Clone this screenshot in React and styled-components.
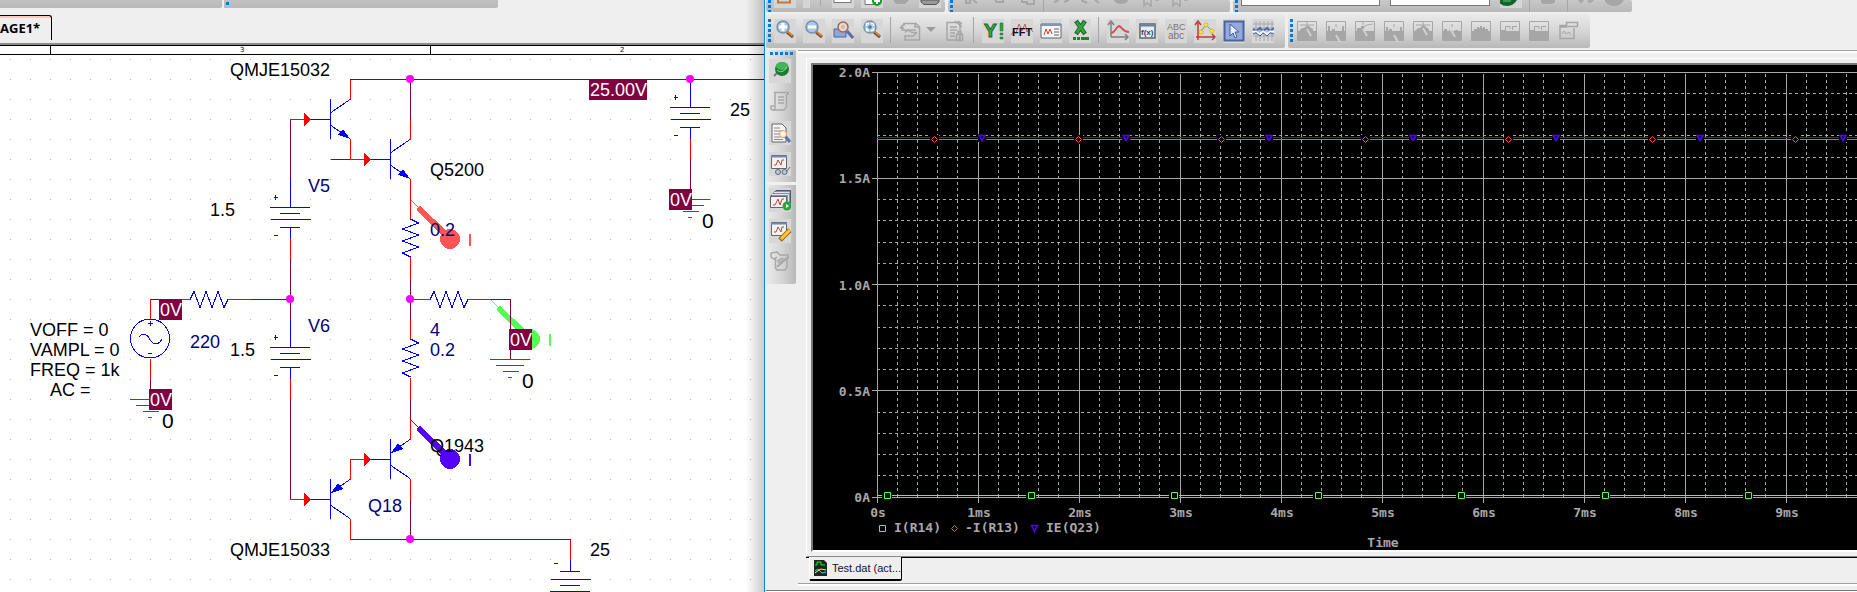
import React from "react";
import styled, { createGlobalStyle } from "styled-components";

const GlobalStyle = createGlobalStyle`
  *, *::before, *::after { box-sizing: border-box; }
  body { margin: 0; background: #efefef; font-family: "Liberation Sans", Arial, sans-serif; overflow: hidden; }
  button { font: inherit; color: inherit; border: 0; padding: 0; background: none; }
`;

const Desktop = styled.main`
  display: flex;
  height: 100vh;
  overflow: hidden;
`;

/* ---------- schematic editor ---------- */

const Editor = styled.section`
  position: relative;
  flex: 0 0 764px;
  display: flex;
  flex-direction: column;
  background: #efefef;
  &::after {
    content: "";
    position: absolute;
    inset: 0 0 0 auto;
    width: 18px;
    background: linear-gradient(90deg, transparent, rgba(0, 0, 0, 0.2));
  }
`;

const EditorBars = styled.div`
  display: flex;
  gap: 2px;
  height: 8px;
`;

const EditorBar = styled.div`
  width: ${(p) => p.$width}px;
  padding: 2px;
  background: linear-gradient(#c1c1c1, #b9b9b9);
  border-bottom-right-radius: 2px;
`;

const BarDot = styled.i`
  display: block;
  width: 3px;
  height: 3px;
  background: #0078d7;
`;

const PageTabs = styled.div`
  display: flex;
  height: 35px;
  padding-top: 7px;
`;

const PageTab = styled.button`
  width: 52px;
  height: 25px;
  text-align: left;
  border-top: 1px solid #000;
  border-right: 1px solid #000;
  border-top-right-radius: 3px;
  box-shadow: inset 0 2px #ffc8c0;
  font: bold 13px "Open Sans", "Noto Sans", sans-serif;
  color: #000;
`;

const Sheet = styled.div`
  flex: 1;
  min-height: 0;
  border-top: 2px solid #8c8c8c;
  background: #fff;
  overflow: hidden;
  svg { display: block; width: 100%; height: 100%; }
`;

const WIRE = "#800040";
const RED = "#ff0000";
const BLUE = "#0000ff";
const NAVY = "#000080";

const Wire = ({ d, c = WIRE }) => <path d={d} stroke={c} fill="none" />;

const Label = ({ x, y, c = "#000", size = 18, children }) => (
  <text x={x} y={y} fill={c} fontSize={size} xmlSpace="preserve">{children}</text>
);

const Tag = ({ x, y, w = 23, children }) => (
  <g>
    <rect x={x} y={y} width={w} height="21" fill={WIRE} />
    <text x={x + 1} y={y + 17} fill="#fff" fontSize="18">{children}</text>
  </g>
);

const Junction = ({ x, y }) => <circle cx={x} cy={y} r="4" fill="#ff00ff" shapeRendering="auto" />;

const Battery = ({ x, y }) => (
  <g transform={`translate(${x} ${y})`}>
    <path
      d="M.5-27V0M-20 .5H20M-10 6.5H10M-19 12.5H21M-10 20.5H10M.5 20V32M-16-9.5H-12M-14.5-12V-7M-16 28.5H-12"
      stroke={BLUE}
      fill="none"
    />
    <path d="M.5 32V52" stroke={RED} />
  </g>
);

const Ground = ({ x, y }) => (
  <path
    transform={`translate(${x} ${y})`}
    d="M-20 .5H20M-14 6.5H14M-7 12.5H9M-2 18.5H2"
    stroke={RED}
  />
);

const Transistor = ({ x, y, pnp }) => (
  <g transform={`translate(${x} ${y})`}>
    <path d="M.5-20V20M-20 .5H0M1-6.5L20-19.5M1 6.5L20 19.5" stroke={BLUE} fill="none" />
    <path d={pnp ? "M1-6L8-16L13-10Z" : "M20 20L8 16L13 10Z"} fill={BLUE} />
    <path d="M-26-6L-19 .5L-26 7Z" fill={RED} />
  </g>
);

const ZIG = "l4-8l6 16l6-16l6 16l6-16l6 16l4-8";
const ZAG = "l8 4l-16 6l16 6l-16 6l16 6l-16 6l8 4";

const Probe = ({ x, y, c }) => (
  <g transform={`translate(${x} ${y})`} stroke={c}>
    <path d="M.5 .5L10 10" />
    <path d="M10 10.5L34 34" strokeWidth="6" strokeLinecap="round" />
    <circle cx="40" cy="40" r="9.5" fill={c} />
    <path d="M60 35V47" strokeWidth="2" />
  </g>
);

const Schematic = () => (
  <svg role="img" aria-label="Amplifier schematic" shapeRendering="crispEdges" fontFamily="Liberation Sans, Arial, sans-serif">
    <defs>
      <pattern id="dots" x="10" y="14" width="20" height="20" patternUnits="userSpaceOnUse">
        <rect width="1" height="1" fill="#b8b8b8" />
      </pattern>
    </defs>
    <rect y="10" width="100%" height="100%" fill="url(#dots)" />
    <rect width="100%" height="1" />
    <rect y="9" width="100%" height="1" />
    <path d="M50.5 0V9M430.5 0V9" stroke="#000" />
    <g transform="translate(0 -45)">
      <text x="240" y="52" fontSize="7" fontFamily="DejaVu Sans, sans-serif">3</text>
      <text x="620" y="52" fontSize="7" fontFamily="DejaVu Sans, sans-serif">2</text>

      <Probe x={410} y={199} c="#ff5555" />
      <Probe x={490} y={299} c="#55ff55" />
      <Probe x={410} y={419} c="#5500ff" />

      <Wire d="M350 79.5H764M410.5 80V120M290.5 120V180M331 159.5H351M290.5 259V320M151 299.5H190M250 299.5H290M290.5 399V500M410.5 279V320M490 299.5H510.5V359M410.5 399V420M410.5 499V540M350 539.5H570.5M690.5 159V190M150.5 379V399" />
      <Wire
        c={RED}
        d="M350.5 80V100M290 119.5H305M350.5 139V160M350 159.5H365M410.5 120V140M410.5 179V220M410.5 257V280M410 299.5H430M468 299.5H491M410.5 320V339M410.5 378V400M410.5 420V440M410.5 479V500M350.5 480V459.5H365M350.5 519V540M290 499.5H305M570.5 540V560M228 299.5H251M182 299.5H190M150.5 299V319M150.5 359V380"
      />
      <Wire c={BLUE} d={`M190 299.5${ZIG}M430 299.5${ZIG}M410.5 219${ZAG}M410.5 339${ZAG}`} />
      <Wire c={BLUE} d="M690.5 80V107M570.5 560V571M560 571.5H580M551 579.5H591M560 585.5H580M550 591.5H590M554 563.5H558" />

      <Transistor x={330} y={119} />
      <Transistor x={390} y={159} />
      <Transistor x={390} y={459} pnp />
      <Transistor x={330} y={499} pnp />
      <Battery x={290} y={207} />
      <Battery x={290} y={347} />
      <Battery x={690} y={107} />
      <Ground x={690} y={199} />
      <Ground x={510} y={359} />
      <Ground x={150} y={399} />
      <circle cx="150" cy="338.500" r="19.5" stroke={BLUE} fill="none" />
      <path d="M139 337C142 333 146 333 149 338C153 346 159 345 162 339M148 323.500H153M150.500 321V326M148 353.500H152" stroke={BLUE} fill="none" />

      <Junction x={410} y={79} />
      <Junction x={690} y={79} />
      <Junction x={290} y={299} />
      <Junction x={410} y={299} />
      <Junction x={410} y={539} />

      <Label x={230} y={76}>QMJE15032</Label>
      <Label x={430} y={176}>Q5200</Label>
      <Label x={308} y={192} c={NAVY}>V5</Label>
      <Label x={210} y={216}>1.5</Label>
      <Label x={430} y={236} c={NAVY}>0.2</Label>
      <Label x={430} y={336} c={NAVY}>4</Label>
      <Label x={430} y={356} c={NAVY}>0.2</Label>
      <Label x={308} y={332} c={NAVY}>V6</Label>
      <Label x={190} y={348} c={NAVY}>220</Label>
      <Label x={230} y={356}>1.5</Label>
      <Label x={30} y={336}>VOFF = 0</Label>
      <Label x={30} y={356}>VAMPL = 0</Label>
      <Label x={30} y={376}>FREQ = 1k</Label>
      <Label x={50} y={396}>AC =</Label>
      <Label x={430} y={452}>Q1943</Label>
      <Label x={368} y={512} c={NAVY}>Q18</Label>
      <Label x={230} y={556}>QMJE15033</Label>
      <Label x={590} y={556}>25</Label>
      <Label x={730} y={116}>25</Label>
      <Label x={702} y={228} size={21}>0</Label>
      <Label x={522} y={388} size={21}>0</Label>
      <Label x={162} y={428} size={21}>0</Label>

      <Tag x={589} y={79} w={58}>25.00V</Tag>
      <Tag x={669} y={189}>0V</Tag>
      <Tag x={159} y={299}>0V</Tag>
      <Tag x={149} y={389}>0V</Tag>
      <Tag x={509} y={329}>0V</Tag>
    </g>
  </svg>
);

/* ---------- simulation window ---------- */

const SimWindow = styled.section`
  flex: 1;
  min-width: 0;
  display: flex;
  flex-direction: column;
  border-left: 1px solid #1883d7;
  padding-left: 1px;
  background: #efefef;
`;

const BarRow = styled.div`
  display: flex;
  flex: none;
  gap: 3px;
  height: ${(p) => p.$height}px;
  margin-bottom: 2px;
`;

const Toolbar = styled.div`
  display: flex;
  flex: none;
  align-items: flex-start;
  width: ${(p) => (p.$width ? `${p.$width}px` : "auto")};
  padding: ${(p) => (p.$cut ? "0 2px" : "5px 4px 5px 2px")};
  border-radius: 2px;
  background: ${(p) => (p.$cut ? "linear-gradient(#c8c8c8, #b8b8b8)" : "linear-gradient(#eaeaea, #d6d6d6 50%, #b9b9b9)")};
  overflow: hidden;
`;

const Grip = styled.i`
  flex: none;
  width: ${(p) => (p.$across ? "23px" : "3px")};
  height: ${(p) => (p.$across ? "3px" : "23px")};
  margin: ${(p) => (p.$across ? "0 0 4px 1px" : "0 3px 0 0")};
  background: repeating-linear-gradient(${(p) => (p.$across ? "90deg" : "180deg")}, #0078d7 0 3px, transparent 3px 5px);
`;

const ToolButton = styled.button`
  flex: none;
  display: block;
  width: ${(p) => p.$width || 22}px;
  height: 24px;
  margin-right: ${(p) => (p.$tight ? 0 : 7)}px;
  background: ${(p) => (p.disabled ? "transparent" : "#d7d7d7")};
  svg { display: block; }
`;

const Sep = styled.i`
  flex: none;
  width: 9px;
  height: 26px;
  margin-top: -2px;
  border-left: 1px solid #a6a6a6;
`;

const CutIcon = styled.i`
  flex: none;
  width: 22px;
  height: 8px;
  margin-right: 7px;
  background: ${(p) => (p.$tile ? "#d5d5d5" : "transparent")};
  svg { display: block; }
`;

const ComboBox = styled.input`
  flex: none;
  width: ${(p) => p.$width}px;
  height: 6px;
  margin-right: 10px;
  padding: 0;
  border: 1px solid #777;
  border-top: 0;
  background: #fff;
`;

const Body = styled.div`
  display: flex;
  flex: 1;
  min-height: 0;
  gap: 2px;
`;

const SideBar = styled.div`
  flex: none;
  align-self: flex-start;
  display: flex;
  flex-direction: column;
  width: 30px;
  height: 234px;
  padding: 2px 3px;
  background: linear-gradient(90deg, #ebebeb, #d6d6d6 50%, #b9b9b9);
  border-radius: 2px;
  button { margin: 0 0 7px; }
`;

const SideSep = styled.i`
  height: 3px;
  margin: -1px -3px 3px;
  background: #f0f0f0;
`;

const Client = styled.div`
  flex: 1;
  min-width: 0;
  display: flex;
  flex-direction: column;
  border-top: 1px solid #a0a0a0;
  border-bottom: 1px solid #a0a0a0;
  box-shadow: inset 0 2px #fff, 0 2px #fff;
`;

const PlotFrame = styled.div`
  flex: 1;
  min-height: 0;
  display: flex;
  margin: 7px 0 0 8px;
  padding: 4px 0 4px 4px;
  border-top: 1px solid #fff;
  border-left: 1px solid #fff;
  border-bottom: 1px solid #888;
  box-shadow: 0 1px #000;
`;

const Plot = styled.div`
  flex: 1;
  min-width: 0;
  border-top: 2px solid #777;
  border-left: 2px solid #777;
  border-bottom: 2px solid #fff;
  background: #000;
  overflow: hidden;
  svg { display: block; width: 100%; height: 100%; }
`;

const DataTabs = styled.div`
  display: flex;
  height: 26px;
  padding-left: 11px;
`;

const DataTab = styled.button`
  position: relative;
  display: flex;
  align-items: center;
  gap: 5px;
  width: 93px;
  height: 24px;
  padding-left: 4px;
  border-left: 1px solid #fff;
  border-right: 1px solid #000;
  border-bottom: 2px solid #000;
  border-radius: 0 0 2px 2px;
  background: #efefef;
  color: #1a1030;
  font-size: 11px;
  white-space: nowrap;
  svg { flex: none; }
`;

const StatusEdge = styled.div`
  height: 2px;
  margin-top: 6px;
  flex: none;
  background: #fff;
  border-top: 1px solid #777;
`;

/* ---------- icons ---------- */

const Svg = ({ children, h = 24, w = 22 }) => (
  <svg width={w} height={h} viewBox={`0 0 ${w} ${h}`} fill="none" aria-hidden="true">{children}</svg>
);

const Lens = ({ children }) => (
  <>
    <path d="M13 13L19 18" stroke="#7a4a20" strokeWidth="3" />
    <path d="M13 12L18.500 17" stroke="#e09040" strokeWidth="1.500" />
    <circle cx="9" cy="8" r="6" fill="#a9c8e4" stroke="#7690aa" strokeWidth="1.500" />
    {children}
  </>
);

const icons = {
  zoomIn: <Lens><path d="M9 4V12M5 8H13" stroke="#fff" strokeWidth="3" /></Lens>,
  zoomOut: <Lens><path d="M5 8H13" stroke="#fff" strokeWidth="3" /></Lens>,
  zoomArea: (
    <>
      <path d="M2 10h12v8H2z" fill="#8fa6dc" stroke="#4b66a6" />
      <path d="M15 12L21 19" stroke="#5570aa" strokeWidth="3" />
      <circle cx="11" cy="8" r="5" fill="#d5dcf0" stroke="#b0643c" strokeWidth="1.500" />
      <circle cx="11" cy="8" r="2" fill="#efb27c" />
    </>
  ),
  zoomFit: (
    <Lens>
      <path d="M5.500 7V4.500H8M10 4.500H12.500V7M12.500 9V11.500H10M8 11.500H5.500V9" stroke="#fff" strokeWidth="1.500" />
      <path d="M7 8H11M9 6V10" stroke="#38618f" />
    </Lens>
  ),
  append: (
    <g stroke="#a6a6a6" strokeWidth="1.500">
      <path d="M5 7V4.500H17L20.500 8V21H6V17" />
      <path d="M1 9L5 5M1 9H5M3 7V11H17" />
      <path d="M6 13.500C8 10 11 12 13 13.500H18M18 13.500L14 17H5" />
      <path d="M16 5V8H20" />
    </g>
  ),
  docLock: (
    <g stroke="#a6a6a6" strokeWidth="1.500">
      <path d="M3 3.500H16V21H3zM6 8H13M6 11H13M6 14H11M6 17H11" />
      <path d="M11 2L18 8M14 2L18 5" />
      <path d="M12.500 15.500H18.500V21.500H12.500zM14 15V12.500H17V15M15.500 17V20" />
    </g>
  ),
  addY: (
    <>
      <text x="2" y="18" fontSize="19" fontWeight="bold" fill="#3cb04c" stroke="#19652a" strokeWidth="1" fontFamily="Liberation Sans">Y</text>
      <path d="M18 4h3v8h-3zM18 14h3v2h-3zM18 18h3v2h-3z" fill="#30a53c" stroke="#19652a" strokeWidth=".5" />
    </>
  ),
  fft: (
    <>
      <path d="M0 16L3 12L5 14L8 5L11 12L14 5L16 13L19 9L22 13" stroke="#e05050" />
      <text x="1" y="17" fontSize="11" fontWeight="bold" fill="#111" fontFamily="Liberation Sans">FFT</text>
    </>
  ),
  perf: (
    <>
      <path d="M1 5h20v14H1z" fill="#f6f6f6" stroke="#5d6570" />
      <path d="M1 6H21" stroke="#7f95b5" strokeWidth="2" />
      <path d="M4 16L6 10L8 15L10 10L12 15" stroke="#cc4040" />
      <path d="M14 10H19M14 13H19M14 16H19" stroke="#606060" />
    </>
  ),
  excel: (
    <>
      <path d="M7 2L16 15M16 2L7 15" stroke="#19652a" strokeWidth="4.500" />
      <path d="M7.500 3L15.500 14M15.500 3L7.500 14" stroke="#2da63a" strokeWidth="2.500" />
      <path d="M4 19.500H7M8 19.500H11M12 19.500H20" stroke="#17852a" strokeWidth="3" />
    </>
  ),
  cursor: (
    <>
      <path d="M4 18V4M1 6L4 2L7 6M4 18H21M18 15L21 18L18 21" stroke="#808080" strokeWidth="1.500" />
      <path d="M4 14C8 14 9 8 12 7C15 8 16 13 22 13" stroke="#cf5555" strokeWidth="2" />
    </>
  ),
  fx: (
    <>
      <path d="M4 5h15v14H4z" fill="#e9edf2" stroke="#596676" strokeWidth="1.500" />
      <path d="M4 6.500H19" stroke="#6e8097" strokeWidth="2" />
      <text x="5" y="16" fontSize="8" fontWeight="bold" fill="#304560" fontFamily="Liberation Sans">f(x)</text>
    </>
  ),
  abc: (
    <g fill="#757575" fontFamily="Liberation Sans">
      <text x="2" y="11" fontSize="9">ABC</text>
      <text x="3" y="20" fontSize="10">abc</text>
    </g>
  ),
  points: (
    <>
      <path d="M4 21V4M1 6L4 2L7 6M2 18H21M18 15L21 18L18 21" stroke="#c43a3a" strokeWidth="1.500" />
      <path d="M7 12L12 6L18 12" stroke="#888" />
      <g fill="#ffe820" stroke="#b89b10" strokeWidth=".5">
        <circle cx="7" cy="13" r="2" /><circle cx="12" cy="6" r="2" /><circle cx="18" cy="12" r="2" />
      </g>
    </>
  ),
  select: (
    <>
      <path d="M1.500 2.500h19v19h-19z" fill="#93aadb" stroke="#4a629e" strokeWidth="2" />
      <path d="M7 5V17L10 14L12 19L14 18L12 13H16z" fill="#e8eefb" stroke="#405a95" />
    </>
  ),
  mark: (
    <>
      <path d="M4 2V22M8 2V22M12 2V22M16 2V22M20 2V22M1 5H22M1 9H22M1 13H22M1 17H22" stroke="#a8a8a8" />
      <path d="M1 10L4 12L8 9L11 12L15 9L18 12L22 9" stroke="#4769ae" strokeWidth="2" />
      <path d="M1 13L4 12L8 15L11 12L15 15L18 12L22 13" stroke="#fff" strokeWidth="1.500" />
      <path d="M1 15L4 14L8 17L11 14L15 17L18 14L22 15" stroke="#4769ae" />
    </>
  ),
  pin: (
    <>
      <path d="M5 17L9 13" stroke="#777" strokeWidth="2" />
      <circle cx="13" cy="10" r="7" fill="#1d7a34" />
      <ellipse cx="13" cy="7" rx="6" ry="4" fill="#43b556" />
      <path d="M8 11C11 14 15 13 18 8" stroke="#8be095" />
    </>
  ),
  scroll: (
    <g stroke="#a8a8a8" strokeWidth="1.500">
      <path d="M5 2.500H19V5M6 3V15M17.500 4V17L15 20H4" />
      <path d="M5 20C2 20 1 18 2 16H6V20" />
      <path d="M9 7H15M9 10H15M9 13H15" />
    </g>
  ),
  viewDoc: (
    <>
      <path d="M3 3H13L17 7V21H3z" fill="#f4f4f4" stroke="#666" />
      <path d="M5 7H11M5 10H14M5 13H12M5 16H12M5 18.500H14" stroke="#888" />
      <path d="M16 15L21 21" stroke="#5877a5" strokeWidth="3" />
      <circle cx="14" cy="13" r="3.500" fill="#fff5e8" stroke="#e8a060" />
    </>
  ),
  glasses: (
    <>
      <path d="M2.500 3.500h15v13h-15z" fill="#f2f2f2" stroke="#666" />
      <path d="M2 4.500H18" stroke="#7187b5" strokeWidth="2" />
      <path d="M5 13H7L9 8L12 13L13 8H15" stroke="#c84040" />
      <path d="M6.500 20a2.500 2.500 0 105 0a2.500 2.500 0 10-5 0M13 20a2.500 2.500 0 105 0a2.500 2.500 0 10-5 0M18 19L21 15" fill="#b5c8dc" stroke="#667" />
    </>
  ),
  run: (
    <>
      <path d="M1.500 8.500L7 2.500H21.500V15L18 20" fill="#7c94c0" stroke="#556" />
      <path d="M3 6.500H19.500V15M5 4.500H20.500" stroke="#dde4ee" />
      <path d="M1.500 8.500h16v11h-16z" fill="#f2f2f2" stroke="#666" />
      <path d="M4 17H6L9 11L11 17L13 11H15" stroke="#c84040" />
      <circle cx="18" cy="18" r="4.500" fill="#2aa63a" />
      <path d="M17 16V20L20 18z" fill="#fff" />
    </>
  ),
  edit: (
    <>
      <path d="M2.500 3.500h15v13h-15z" fill="#f2f2f2" stroke="#666" />
      <path d="M2 4.500H18" stroke="#7187b5" strokeWidth="2" />
      <path d="M5 13H7L9 8L12 13L13 8H15" stroke="#c84040" />
      <path d="M11 21L21 11" stroke="#a06b18" strokeWidth="5" />
      <path d="M12 20L21 11" stroke="#ffc832" strokeWidth="3" />
    </>
  ),
  script: (
    <g stroke="#a8a8a8" strokeWidth="1.500">
      <path d="M2 3L8 2L11 5H19V9M2 3V7L5 9L8 7M6.500 8V18L8 20H16L18 17V7M8 11L14 8M9 13L17 9" />
      <path d="M8 17L19 7" strokeWidth="2" />
    </g>
  ),
};

const base = "M2 12H20V21H2z";
const wave = [
  { fill: "M3 12L6 9H8L10 7H13L15 9L17 10V12z", line: "M4 6H18M11 3V7", hand: "M11 10L15 17" },
  { fill: "M3 7H5V12H3zM17 7H19V12H17zM7 10H10V12H7z", line: "M11 5V8", hand: "M11 16L15 23" },
  { fill: "M3 12V9H7V7H10V12z", line: "M9 3V6M10 8C13 5 15 6 19 5", hand: "M9 10L13 17" },
  { fill: "M3 8H5V12H3zM17 8H19V12H17zM6 10H9V12H6z", line: "M11 5V8", hand: "M11 16L15 23" },
  { fill: "M3 12L6 9H8L10 7H13L15 9L17 10V12z", line: "M4 6H18M11 3V7", hand: "M11 9L15 16" },
  { fill: "M3 10H6V12H3zM14 11H17V12H14z", line: "M11 5V8M8 11H9", hand: "M10 11L14 18" },
  { fill: "M4 12V10H7V8H9V9H10V7H12V9H13V8H15V10H18V12z", line: "" },
  { fill: "M2 11H7V12H2z", line: "M6.500 11V7.500H11V10M13.500 11V7.500H18" },
  { fill: "M2 11H7V12H2z", line: "M6.500 11V7.500H11V10M13.500 11V7.500H18" },
];

const CursorTool = ({ shape }) => (
  <Svg>
    <path d="M1.500 2.500h19v19h-19z" stroke="#a6a6a6" />
    <path d={base + shape.fill} fill="#a6a6a6" />
    <path d={shape.line} stroke="#a6a6a6" />
    {shape.hand && <path d={shape.hand} stroke="#d0d0d0" strokeWidth="2" />}
  </Svg>
);

const Tool = ({ icon, label, off }) => (
  <ToolButton aria-label={label} disabled={off}>
    <Svg>{icons[icon]}</Svg>
  </ToolButton>
);

const cursorNames = ["Peak", "Trough", "Slope", "Minimum", "Maximum", "Point", "Search", "Next", "Previous"];

/* ---------- waveform plot ---------- */

const X0 = 64;
const TOP = 7;
const BOTTOM = 432;
const MS = 101;
const PITCH = 143.5;
const steps = (n) => Array.from({ length: n }, (_, i) => i);
const crisp = (v) => Math.floor(v) + 0.5;

const Waveform = () => {
  const minorX = steps(50).filter((i) => i % 5).map((i) => crisp(X0 + (i * MS) / 5));
  const minorY = steps(20).filter((i) => i % 5).map((i) => crisp(TOP + i * 21.25));
  return (
    <svg role="img" aria-label="Simulation traces" fontFamily="DejaVu Sans Mono, monospace" fontSize="13" fontWeight="bold" fill="#a8a8a8">
      <g stroke="#a8a8a8" fill="none" shapeRendering="crispEdges">
        <g strokeDasharray="3 3">
          {minorX.map((x) => <path key={x} d={`M${x} ${TOP + 2}V${BOTTOM}`} />)}
          {minorY.map((y) => <path key={y} d={`M${X0} ${y}H2000`} />)}
        </g>
        {steps(10).map((i) => <path key={i} d={`M${X0 + i * MS + 0.5} ${i ? TOP + 2 : TOP}V${BOTTOM + 6}`} />)}
        {steps(5).map((i) => <path key={i} d={`M${X0 - 5} ${crisp(TOP + i * 106.25)}H2000`} />)}
      </g>
      <g fill="none" shapeRendering="crispEdges">
        <path d="M64 72.500H2000" stroke="#5500ff" />
        <path d="M64 74.500H2000" stroke="#ff5555" />
        <path d="M64 430.500H2000" stroke="#55ff55" />
      </g>
      {steps(7).map((i) => {
        const off = Math.round(i * PITCH);
        return (
          <g key={i} fill="#000">
            <path d={`M${117 + off} 70h9v9h-9z`} />
            <path d={`M${121.5 + off} 71.500l3 3l-3 3l-3-3z`} stroke="#ff5555" />
            <path d={`M${165 + off} 69h8v8h-8z`} />
            <path d={`M${166 + off} 70.500h6l-3 5z`} stroke="#5500ff" strokeWidth="1.500" />
            <path d={`M${69 + off} 427h10v7h-10z`} />
            <path d={`M${71.5 + off} 427.500h6v6h-6z`} stroke="#55ff55" />
          </g>
        );
      })}
      <g textAnchor="end">
        {["2.0A", "1.5A", "1.0A", "0.5A", "0A"].map((t, i) => (
          <text key={t} x="57" y={Math.round(12 + i * 106.25)}>{t}</text>
        ))}
      </g>
      <g textAnchor="middle">
        {steps(10).map((i) => <text key={i} x={X0 + 1 + i * MS} y="452">{i ? `${i}ms` : "0s"}</text>)}
        <text x="570" y="482">Time</text>
      </g>
      <path d="M66.500 460.500h6v6h-6z" stroke="#55ff55" fill="none" />
      <text x="81" y="467">I(R14)</text>
      <path d="M141.500 460.500l3 3l-3 3l-3-3z" stroke="#ff5555" fill="none" />
      <text x="152" y="467">-I(R13)</text>
      <path d="M218.500 460.500h6l-3 6z" stroke="#5500ff" strokeWidth="1.500" fill="none" />
      <text x="233" y="467">IE(Q23)</text>
    </svg>
  );
};

export default function App() {
  return (
    <Desktop>
      <GlobalStyle />
      <Editor>
        <EditorBars>
          <EditorBar $width={222} />
          <EditorBar $width={274}><BarDot /></EditorBar>
        </EditorBars>
        <PageTabs>
          <PageTab>AGE1*</PageTab>
        </PageTabs>
        <Sheet><Schematic /></Sheet>
      </Editor>

      <SimWindow>
        <BarRow $height={12}>
          <Toolbar $cut $width={179}>
            <Grip />
            <CutIcon $tile><Svg h={8}><path d="M4 0V2.500H16V0" stroke="#c67835" strokeWidth="2" /></Svg></CutIcon>
            <CutIcon><Svg h={8}><path d="M0 0H7V8H0z" fill="#d5d5d5" /><path d="M17.500 0V6" stroke="#a6a6a6" /></Svg></CutIcon>
            <CutIcon $tile><Svg h={8}><path d="M2 0V2.500H19V0" fill="#fff" stroke="#777" /></Svg></CutIcon>
            <CutIcon $tile>
              <Svg h={8}><path d="M4 0V4.500H18V0" fill="#fff" stroke="#777" /><circle cx="16" cy="1" r="5" fill="#22992e" /><path d="M13 1H19M16-2V4" stroke="#fff" strokeWidth="2" /></Svg>
            </CutIcon>
            <CutIcon><Svg h={8}><path d="M3 0H19L15 4H6z" fill="#a6a6a6" /></Svg></CutIcon>
            <CutIcon $tile><Svg h={8}><path d="M2 0V2L5 4.500H17L20 2V0z" fill="#999" stroke="#555" /></Svg></CutIcon>
          </Toolbar>
          <Toolbar $cut $width={282}>
            <Grip />
            <CutIcon><Svg h={8}><path d="M10 0V3H14V0M17 0L21 3" stroke="#a6a6a6" strokeWidth="2" /></Svg></CutIcon>
            <CutIcon><Svg h={8}><path d="M10 0L12 2H18V0" stroke="#a6a6a6" strokeWidth="2" /></Svg></CutIcon>
            <CutIcon><Svg h={8}><path d="M8 0V2H13V4H20V0" stroke="#a6a6a6" strokeWidth="2" /></Svg></CutIcon>
            <Sep />
            <CutIcon><Svg h={8}><path d="M12 2L17 0M2 2L7 0" stroke="#a6a6a6" strokeWidth="2" /></Svg></CutIcon>
            <CutIcon><Svg h={8}><path d="M0 0L6 3M14 0L18 3" stroke="#a6a6a6" strokeWidth="2" /></Svg></CutIcon>
            <CutIcon><Svg h={8}><ellipse cx="11" cy="0" rx="7" ry="4" fill="#a6a6a6" /></Svg></CutIcon>
            <CutIcon><Svg h={8}><path d="M5 0V6L8 3L12 6V0M16 0H20" stroke="#a6a6a6" strokeWidth="1.500" /></Svg></CutIcon>
            <CutIcon><Svg h={8}><path d="M5 0V6L8 3L12 6V0M16 0H20" stroke="#a6a6a6" strokeWidth="1.500" /></Svg></CutIcon>
          </Toolbar>
          <Toolbar $cut $width={399}>
            <Grip />
            <ComboBox $width={139} aria-label="Run profile" />
            <ComboBox $width={100} aria-label="Run to time" />
            <CutIcon $tile><Svg h={8}><circle cx="7" cy="-5" r="11" fill="#136427" /><path d="M3 1H11" stroke="#3f9450" strokeWidth="2" /></Svg></CutIcon>
            <Sep />
            <CutIcon><Svg h={8}><path d="M3 0V2L5 4H14L17 2V0z" fill="#a6a6a6" /></Svg></CutIcon>
            <Sep />
            <CutIcon><Svg h={8}><path d="M3 0L5 2L7 0M12 0L14 2L17 0" stroke="#a6a6a6" strokeWidth="2" /></Svg></CutIcon>
            <CutIcon><Svg h={8}><circle cx="9" cy="-5" r="11" fill="#a6a6a6" /></Svg></CutIcon>
          </Toolbar>
        </BarRow>

        <BarRow $height={34}>
          <Toolbar>
            <Grip />
            <Tool icon="zoomIn" label="Zoom in" />
            <Tool icon="zoomOut" label="Zoom out" />
            <Tool icon="zoomArea" label="Zoom area" />
            <Tool icon="zoomFit" label="Zoom fit" />
            <Sep />
            <ToolButton disabled $tight aria-label="Append file"><Svg>{icons.append}</Svg></ToolButton>
            <ToolButton disabled $width={16} aria-label="Append options">
              <Svg w={16}><path d="M5 8H15L10 13z" fill="#9c9c9c" /></Svg>
            </ToolButton>
            <Tool icon="docLock" label="Lock data" off />
            <Sep />
            <Tool icon="addY" label="Add Y axis" />
            <Tool icon="fft" label="Fourier" />
            <Tool icon="perf" label="Performance analysis" />
            <Tool icon="excel" label="Log X axis" />
            <Sep />
            <Tool icon="cursor" label="Add trace" />
            <Tool icon="fx" label="Evaluate measurement" />
            <Tool icon="abc" label="Text label" />
            <Tool icon="points" label="Mark data points" />
            <Tool icon="select" label="Toggle cursor" />
            <Tool icon="mark" label="Grid" />
          </Toolbar>
          <Toolbar>
            <Grip />
            {cursorNames.map((name, i) => (
              <ToolButton key={name} disabled aria-label={`Cursor ${name}`}><CursorTool shape={wave[i]} /></ToolButton>
            ))}
            <ToolButton disabled aria-label="Mark label">
              <Svg>
                <path d="M10 6.500H3V19.500H17V9M3 8H10M9.500 3.500h11v4h-11z" stroke="#a6a6a6" strokeWidth="1.500" />
                <path d="M5 15L7 12L9 15L12 13L14 16" stroke="#a6a6a6" />
              </Svg>
            </ToolButton>
          </Toolbar>
        </BarRow>

        <Body>
          <SideBar>
            <Grip $across />
            <Tool icon="pin" label="Pin window" />
            <Tool icon="scroll" label="Output log" off />
            <Tool icon="viewDoc" label="View output file" />
            <Tool icon="glasses" label="View simulation results" />
            <SideSep />
            <Tool icon="run" label="Run queue" />
            <Tool icon="edit" label="Edit profile" />
            <Tool icon="script" label="Messages" off />
          </SideBar>
          <Client>
            <PlotFrame>
              <Plot><Waveform /></Plot>
            </PlotFrame>
            <DataTabs>
              <DataTab>
                <svg width="13" height="16" viewBox="0 0 13 16" fill="none" aria-hidden="true">
                  <path d="M0 0H10L13 3V16H0z" fill="#222" />
                  <path d="M1 5H3V2H7V5H11" stroke="#0f0" />
                  <path d="M1 11L4 9L8 13L12 12" stroke="#00e5ff" />
                  <path d="M1 13L5 10L7 9L12 10" stroke="#ff0" />
                </svg>
                Test.dat (act...
              </DataTab>
            </DataTabs>
          </Client>
        </Body>
        <StatusEdge />
      </SimWindow>
    </Desktop>
  );
}
